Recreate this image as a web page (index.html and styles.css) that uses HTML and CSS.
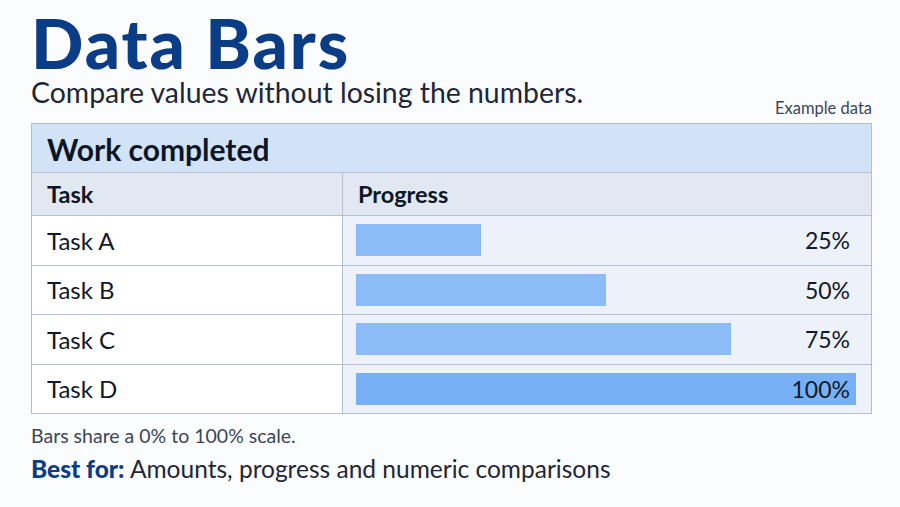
FILE: index.html
```html
<!DOCTYPE html>
<html lang="en">
<head>
<meta charset="utf-8">
<title>Data Bars</title>
<link rel="stylesheet" href="styles.css">
</head>
<body>
<main class="page">
  <h1 class="title">Data Bars</h1>
  <p class="subtitle">Compare values without losing the numbers.</p>
  <div class="meta">Example data</div>
  <table class="grid">
    <caption class="caption">Work completed</caption>
    <thead>
      <tr><th class="col-task">Task</th><th class="col-prog">Progress</th></tr>
    </thead>
    <tbody>
      <tr><td class="task">Task A</td><td class="prog"><div class="track"><div class="bar" style="width:25%"></div><span class="val">25%</span></div></td></tr>
      <tr><td class="task">Task B</td><td class="prog"><div class="track"><div class="bar" style="width:50%"></div><span class="val">50%</span></div></td></tr>
      <tr><td class="task">Task C</td><td class="prog"><div class="track"><div class="bar" style="width:75%"></div><span class="val">75%</span></div></td></tr>
      <tr><td class="task">Task D</td><td class="prog"><div class="track"><div class="bar full" style="width:100%"></div><span class="val">100%</span></div></td></tr>
    </tbody>
  </table>
  <p class="note">Bars share a 0% to 100% scale.</p>
  <p class="best"><strong>Best for:</strong> Amounts, progress and numeric comparisons</p>
</main>
</body>
</html>
```
FILE: styles.css
```css
* { box-sizing: border-box; }
html, body { margin: 0; padding: 0; }
body {
  background: #fbfcfd;
  font-family: Lato, "Noto Sans", sans-serif;
  color: #17202e;
  width: 900px;
  height: 507px;
  overflow: hidden;
}
.page {
  padding: 8px 28px 0 31px;
  display: flex;
  flex-direction: column;
}
.title {
  margin: 0;
  font-size: 69px;
  line-height: 70px;
  font-weight: 900;
  color: #0b3c86;
  letter-spacing: 2px;
}
.subtitle {
  margin: 0;
  font-size: 28.4px;
  line-height: 28px;
  color: #1d2737;
}
.meta {
  align-self: flex-end;
  font-size: 16.5px;
  line-height: 18px;
  color: #3c4656;
  margin-top: -7px;
  margin-bottom: 6px;
}
.grid {
  width: 841px;
  border-collapse: collapse;
  border: 1px solid #b4c0d0;
}
.caption {
  caption-side: top;
  text-align: left;
  background: #d3e3f7;
  border: 1px solid #b4c0d0;
  border-bottom: none;
  height: 49px;
  padding: 7px 15px 0;
  font-size: 30px;
  font-weight: 700;
  color: #0d1626;
}
th {
  background: #e2e8f1;
  text-align: left;
  height: 43px;
  font-size: 23.5px;
  font-weight: 700;
  color: #0d1626;
  padding: 0 15px;
  border: 1px solid #b4c0d0;
}
.col-task { width: 311px; }
td {
  height: 49.5px;
  border: 1px solid #b4c0d0;
  padding: 0;
}
.task {
  background: #ffffff;
  font-size: 24px;
  padding: 0 15px;
  color: #111827;
}
.prog {
  background: #edf2fa;
  padding: 0 15px 0 13px;
}
.track {
  position: relative;
  height: 32px;
  display: flex;
  align-items: center;
  justify-content: flex-end;
}
.bar {
  position: absolute;
  left: 0;
  top: 0;
  height: 32px;
  background: #8bbcf7;
}
.bar.full { background: #77b0f4; }
.val {
  position: relative;
  font-size: 23px;
  color: #111827;
  padding-right: 6px;
}
.note {
  margin: 10px 0 0;
  font-size: 19.5px;
  line-height: 24px;
  color: #3c4656;
}
.best {
  margin: 6px 0 0;
  font-size: 24.5px;
  line-height: 30px;
  color: #1d2737;
}
.best strong {
  color: #0b3c86;
  font-weight: 900;
}
```
